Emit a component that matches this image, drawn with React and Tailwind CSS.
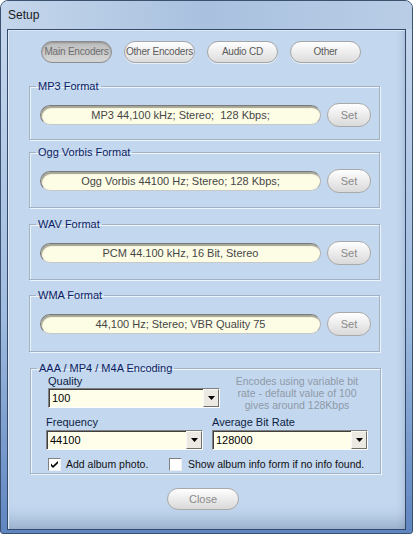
import React, { useState } from "react";

const PillButton = ({ label, width, pressed, onClick, className = "" }) => (
    <button
        onClick={onClick}
        className={
            "h-[22px] rounded-full text-[10px] leading-none whitespace-nowrap tracking-[-0.2px] flex items-center justify-center " +
            (pressed
                ? "bg-gradient-to-b from-[#bdbdbd] to-[#d6d6d6] border border-[#8c8c8c] text-[#6e6e6e] shadow-[inset_0_1px_2px_rgba(0,0,0,0.25)] "
                : "bg-gradient-to-b from-[#ffffff] to-[#dcdcdc] border border-[#a6a6a6] text-[#5a5a5a] shadow-[0_1px_0_rgba(255,255,255,0.6)] ") +
            width +
            " " +
            className
        }
    >
        {label}
    </button>
);

const SetButton = () => (
    <button className="w-[44px] h-[24px] rounded-full bg-gradient-to-b from-[#ffffff] to-[#d9d9d9] border border-[#a9a9a9] text-[11px] text-[#8a8a8a] flex items-center justify-center">
        Set
    </button>
);

const FormatGroup = ({ title, value, height, top }) => (
    <fieldset className={"ml-[21px] w-[351px] px-0 pt-[10px] border border-[#a2b2c4] shadow-[inset_1px_1px_0_#eef4fb,1px_1px_0_#eef4fb] " + height + " " + top}>
        <legend className="ml-[6px] px-[2px] text-[11px] leading-[14px] text-[#0d1d63]">{title}</legend>
        <div className="flex items-center h-[24px] pl-[10px] gap-[6px]">
            <div className="w-[281px] h-[20px] rounded-full bg-[#fdfde6] border border-[#7a7a7a] border-b-[#c8c8c8] border-r-[#b0b0b0] shadow-[inset_1px_2px_1px_rgba(0,0,0,0.35)] flex items-center justify-center text-[11px] text-[#464646] whitespace-pre">
                {value}
            </div>
            <SetButton />
        </div>
    </fieldset>
);

const Combo = ({ value, width }) => (
    <div className={"h-[20px] flex items-center bg-[#fffeea] border-t border-l border-t-[#808080] border-l-[#808080] border-b border-r border-b-[#ffffff] border-r-[#ffffff] " + width}>
        <div className="flex-1 h-full flex items-center border-t border-l border-[#404040] pl-[2px] text-[11px] text-black">
            {value}
        </div>
        <div className="w-[16px] h-full flex items-center justify-center bg-[#ece9e2] border-t border-l border-t-[#f8f8f8] border-l-[#f8f8f8] border-b border-r border-b-[#6e6e6e] border-r-[#6e6e6e]">
            <svg width="7" height="4" viewBox="0 0 7 4">
                <path d="M0 0h7L3.5 4z" fill="#000" />
            </svg>
        </div>
    </div>
);

const CheckBox = ({ checked }) => (
    <div className="w-[13px] h-[13px] shrink-0 bg-white border-t border-l border-t-[#808080] border-l-[#808080] border-b border-r border-b-[#f0f0f0] border-r-[#f0f0f0] flex items-center justify-center">
        {checked && (
            <svg width="9" height="9" viewBox="0 0 9 9">
                <path d="M1 3.6l2 2.1L8 0.9v2.3L3 8 1 5.9z" fill="#000" />
            </svg>
        )}
    </div>
);

const App = () => {
    const [tab, setTab] = useState(0);
    const tabs = ["Main Encoders", "Other Encoders", "Audio CD", "Other"];

    return (
        <div className="w-[413px] h-[534px] flex flex-col rounded-t-[8px] rounded-b-[3px] border border-[#3b5170] bg-gradient-to-b from-[#c7d8ed] via-[#9fbbdf] via-60% to-[#5f85c0] font-['Liberation_Sans',Arial,sans-serif] overflow-hidden">
            <div className="h-[28px] px-[7px] flex items-center text-[12px] text-[#1b1b1b] bg-gradient-to-r from-[#c4d6eb] via-[#a9c1df] to-[#b9cde6]">
                Setup
            </div>

            <div className="mx-[6px] mb-[3px] flex-1 flex flex-col bg-[#c3d7ef] border border-[#34496a] shadow-[inset_1px_1px_0_#dfeaf7,inset_0_-20px_16px_-12px_rgba(70,95,130,0.35),inset_-6px_0_8px_-6px_rgba(70,95,130,0.3)]">
                <div className="flex pl-[33px] pt-[11px] gap-[12px]">
                    {tabs.map((t, i) => (
                        <PillButton key={t} label={t} width="w-[71px]" pressed={tab === i} onClick={() => setTab(i)} />
                    ))}
                </div>

                <FormatGroup title="MP3 Format" value="MP3 44,100 kHz; Stereo;  128 Kbps;" height="h-[61px]" top="mt-[16px]" />
                <FormatGroup title="Ogg Vorbis Format" value="Ogg Vorbis 44100 Hz; Stereo; 128 Kbps;" height="h-[63px]" top="mt-[5px]" />
                <FormatGroup title="WAV Format" value="PCM 44.100 kHz, 16 Bit, Stereo" height="h-[63px]" top="mt-[9px]" />
                <FormatGroup title="WMA Format" value="44,100 Hz; Stereo; VBR Quality 75" height="h-[64px]" top="mt-[8px]" />

                <fieldset className="ml-[22px] mt-[9px] w-[351px] h-[113px] px-0 border border-[#a2b2c4] shadow-[inset_1px_1px_0_#eef4fb,1px_1px_0_#eef4fb]">
                    <legend className="ml-[6px] px-[2px] text-[11px] leading-[14px] text-[#0d1d63]">AAA / MP4 / M4A Encoding</legend>
                    <div className="flex pl-[17px]">
                        <div className="w-[172px]">
                            <div className="h-[13px] leading-[12px] text-[11px] text-[#0d1d43]">Quality</div>
                            <Combo value="100" width="w-[172px]" />
                        </div>
                        <div className="ml-[14px] w-[126px] text-center text-[10.5px] leading-[12px] text-[#8f9aa7] whitespace-nowrap">
                            <div>Encodes using variable bit</div>
                            <div>rate - default value of 100</div>
                            <div>gives around 128Kbps</div>
                        </div>
                    </div>
                    <div className="flex pl-[15px] mt-[4px] gap-[9px]">
                        <div className="w-[157px]">
                            <div className="h-[15px] leading-[14px] text-[11px] text-[#0d1d43]">Frequency</div>
                            <Combo value="44100" width="w-[157px]" />
                        </div>
                        <div className="w-[156px]">
                            <div className="h-[15px] leading-[14px] text-[11px] text-[#0d1d43]">Average Bit Rate</div>
                            <Combo value="128000" width="w-[156px]" />
                        </div>
                    </div>
                    <div className="flex items-center h-[13px] mt-[8px] pl-[17px] text-[10.5px] text-[#111] whitespace-nowrap">
                        <CheckBox checked />
                        <span className="ml-[5px] w-[103px]">Add album photo.</span>
                        <CheckBox />
                        <span className="ml-[6px]">Show album info form if no info found.</span>
                    </div>
                </fieldset>

                <div className="pl-[159px] mt-[12px]">
                    <button className="w-[72px] h-[22px] rounded-full bg-gradient-to-b from-[#ffffff] to-[#d9d9d9] border border-[#a9a9a9] text-[11px] text-[#8a8a8a]">
                        Close
                    </button>
                </div>
            </div>
        </div>
    );
};

export default App;
